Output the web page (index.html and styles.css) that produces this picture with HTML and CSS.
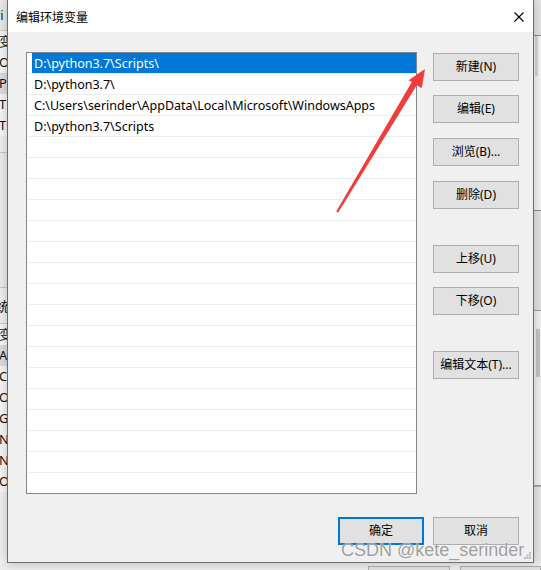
FILE: index.html
```html
<!DOCTYPE html>
<html lang="zh-CN">
<head>
<meta charset="utf-8">
<title>编辑环境变量</title>
<link rel="stylesheet" href="styles.css">
</head>
<body>
<div class="desktop">
  <div class="back-left">
    <div class="bl-top">ri</div>
    <div class="bl-item">变</div>
    <div class="bl-item">O</div>
    <div class="bl-item bl-sel">Pa</div>
    <div class="bl-item">TE</div>
    <div class="bl-item">TM</div>
    <div class="bl-gap"></div>
    <div class="bl-head">统</div>
    <div class="bl-item">变</div>
    <div class="bl-item bl-sel">AD</div>
    <div class="bl-item">Co</div>
    <div class="bl-item">Or</div>
    <div class="bl-item">GT</div>
    <div class="bl-item">N</div>
    <div class="bl-item">N</div>
    <div class="bl-item">O</div>
  </div>
  <div class="back-right">
    <div class="br-top"></div>
    <div class="br-list"><div class="br-thumb"></div></div>
    <div class="br-band"></div>
    <div class="br-list2"><div class="br-thumb2"></div></div>
    <div class="br-band2"></div>
  </div>
  <div class="back-bottom">
    <div class="bb-btn"></div>
    <div class="bb-btn"></div>
  </div>

  <div class="dialog">
    <div class="titlebar">
      <span class="title">编辑环境变量</span>
      <svg class="close" width="10" height="10" viewBox="0 0 10 10"><path d="M0.5 0.5 L9.5 9.5 M9.5 0.5 L0.5 9.5" stroke="#000" stroke-width="1.1" fill="none"/></svg>
    </div>
    <div class="body">
      <div class="main">
        <div class="list">
          <div class="row selected"><span class="cell">D:\python3.7\Scripts\</span></div>
          <div class="row"><span class="cell">D:\python3.7\</span></div>
          <div class="row"><span class="cell">C:\Users\serinder\AppData\Local\Microsoft\WindowsApps</span></div>
          <div class="row"><span class="cell">D:\python3.7\Scripts</span></div>
          <div class="row"></div><div class="row"></div><div class="row"></div><div class="row"></div>
          <div class="row"></div><div class="row"></div><div class="row"></div><div class="row"></div>
          <div class="row"></div><div class="row"></div><div class="row"></div><div class="row"></div>
          <div class="row"></div><div class="row"></div><div class="row"></div><div class="row"></div>
          <div class="row"></div><div class="row"></div>
        </div>
        <div class="side">
          <button class="btn b-new">新建(N)</button>
          <button class="btn b-edit">编辑(E)</button>
          <button class="btn b-browse">浏览(B)...</button>
          <button class="btn b-del">删除(D)</button>
          <button class="btn b-up">上移(U)</button>
          <button class="btn b-down">下移(O)</button>
          <button class="btn b-text">编辑文本(T)...</button>
        </div>
      </div>
      <div class="footer">
        <button class="btn default">确定</button>
        <button class="btn">取消</button>
      </div>
    </div>
    <svg class="grip" width="7" height="7" viewBox="0 0 7 7">
      <rect x="5" y="0" width="2" height="2" fill="#bdbdbd"/>
      <rect x="2.5" y="2.5" width="2" height="2" fill="#bdbdbd"/>
      <rect x="5" y="2.5" width="2" height="2" fill="#bdbdbd"/>
      <rect x="0" y="5" width="2" height="2" fill="#bdbdbd"/>
      <rect x="2.5" y="5" width="2" height="2" fill="#bdbdbd"/>
      <rect x="5" y="5" width="2" height="2" fill="#bdbdbd"/>
    </svg>
  </div>

  <svg class="arrow" width="541" height="570" viewBox="0 0 541 570">
    <polygon points="425,69 421.8,88 416.7,85.2 338.2,212.6 336.2,211.6 411.8,82.1 408.6,80.3" fill="#f43b3b"/>
  </svg>
  <div class="watermark">CSDN @kete_serinder</div>
</div>
</body>
</html>
```

FILE: styles.css
```css
* { box-sizing: border-box; }
html, body { margin: 0; padding: 0; }
body {
  width: 541px;
  height: 570px;
  overflow: hidden;
  background: #f0f0f0;
  font-family: "Noto Sans", "Noto Sans CJK SC", sans-serif;
  font-size: 12px;
  color: #000;
}
.desktop {
  position: relative;
  width: 541px;
  height: 570px;
  overflow: hidden;
  background: #f0f0f0;
}

/* background windows (desktop layer) */
.back-left {
  position: absolute;
  left: 0;
  top: 0;
  width: 60px;
  height: 570px;
  background: #f0f0f0;
  display: flex;
  flex-direction: column;
  font-size: 13px;
}
.bl-top {
  height: 31px;
  line-height: 30px;
  margin-left: -5px;
  background: #e9e9e9;
  border-bottom: 1px solid #c9c9c9;
  color: #222;
}
.bl-item {
  height: 21px;
  line-height: 21px;
  margin-left: -1px;
  color: #111;
  background: #f6f6f6;
}
.bl-sel { background: #dcdcdc; }
.bl-gap {
  height: 136px;
  border-top: 1px solid #c8c8c8;
  margin-top: 16px;
  background: #ececec;
  border-bottom: 1px solid #c8c8c8;
}
.bl-head {
  height: 36px;
  line-height: 36px;
  border-bottom: 1px solid #c8c8c8;
  margin-left: -4px;
}
.back-right {
  position: absolute;
  left: 533px;
  top: 0;
  width: 8px;
  height: 570px;
  background: #efefef;
  display: flex;
  flex-direction: column;
}
.br-top { height: 36px; background: #e4e4e4; border-bottom: 1px solid #8a8a8a; }
.br-list { height: 174px; background: #f4f4f4; position: relative; }
.br-thumb { position: absolute; left: 2px; top: 0; width: 3px; height: 40px; background: #d6d6d6; }
.br-band { height: 101px; background: #e2e2e2; border-top: 1px solid #8f8f8f; border-bottom: 1px solid #a0a0a0; }
.br-list2 { height: 175px; background: #f0f0f0; position: relative; border-bottom: 1px solid #9a9a9a; }
.br-thumb2 { position: absolute; left: 3px; top: 18px; width: 4px; height: 48px; background: #c4c4c4; }
.br-band2 { flex: 1; background: #e6e6e6; border-top: 1px solid #b0b0b0; }

.back-bottom {
  position: absolute;
  left: 0;
  top: 563px;
  width: 541px;
  height: 7px;
  background: #ececec;
  display: flex;
  gap: 10px;
  padding-left: 368px;
  padding-top: 3px;
}
.bb-btn {
  width: 86px;
  height: 10px;
  border: 1px solid #adadad;
  background: #e1e1e1;
}

/* dialog */
.dialog {
  position: absolute;
  left: 7px;
  top: -1px;
  width: 527px;
  height: 564px;
  border: 1px solid #6d6d6d;
  background: #f0f0f0;
  display: flex;
  flex-direction: column;
  box-shadow: 0 0 10px rgba(0,0,0,0.22);
}
.titlebar {
  height: 32px;
  background: #fff;
  display: flex;
  align-items: center;
  justify-content: space-between;
  padding: 0 9px 0 8px;
  flex: none;
}
.title {
  font-family: "Noto Sans CJK SC", sans-serif;
  font-size: 12px;
  color: #000;
  margin-top: 1px;
}
.close { display: block; margin-top: 1px; }
.body {
  flex: 1;
  padding: 20px 14px 17px 18px;
  display: flex;
  flex-direction: column;
}
.main {
  display: flex;
  gap: 16px;
  align-items: flex-start;
}
.list {
  width: 391px;
  height: 442px;
  border: 1px solid #828790;
  background: #fff;
  overflow: hidden;
  flex: none;
}
.row {
  height: 21px;
  border-bottom: 1px solid #ededed;
  display: flex;
  padding-left: 5px;
}
.cell {
  flex: 1;
  font-size: 12.5px;
  line-height: 20px;
  padding-left: 2px;
  padding-top: 1px;
  white-space: nowrap;
}
.selected .cell {
  background: #0078d7;
  color: #fff;
}
.side {
  display: flex;
  flex-direction: column;
  width: 86px;
}
.btn {
  width: 86px;
  height: 28px;
  border: 1px solid #adadad;
  background: #e1e1e1;
  font-family: "Noto Sans", "Noto Sans CJK SC", sans-serif;
  font-size: 12px;
  color: #000;
  padding: 0;
  margin: 0;
  line-height: 26px;
  text-align: center;
}
.b-new { margin-top: 1px; }
.b-edit { margin-top: 14px; }
.b-browse { margin-top: 15px; }
.b-del { margin-top: 15px; }
.b-up { margin-top: 36px; }
.b-down { margin-top: 14px; }
.b-text { margin-top: 36px; }
.footer {
  display: flex;
  justify-content: flex-end;
  gap: 9px;
  margin-top: 23px;
}
.btn.default {
  border: 2px solid #0078d7;
  line-height: 24px;
}
.grip {
  position: absolute;
  right: 2px;
  bottom: 3px;
}

.arrow {
  position: absolute;
  left: 0;
  top: 0;
  pointer-events: none;
}
.watermark {
  position: absolute;
  left: 341px;
  top: 540px;
  font-family: "Liberation Sans", Arial, sans-serif;
  font-size: 18px;
  line-height: 20px;
  color: rgba(140, 140, 140, 0.85);
  text-shadow: 0 0 1px #fff;
  white-space: nowrap;
}
```
